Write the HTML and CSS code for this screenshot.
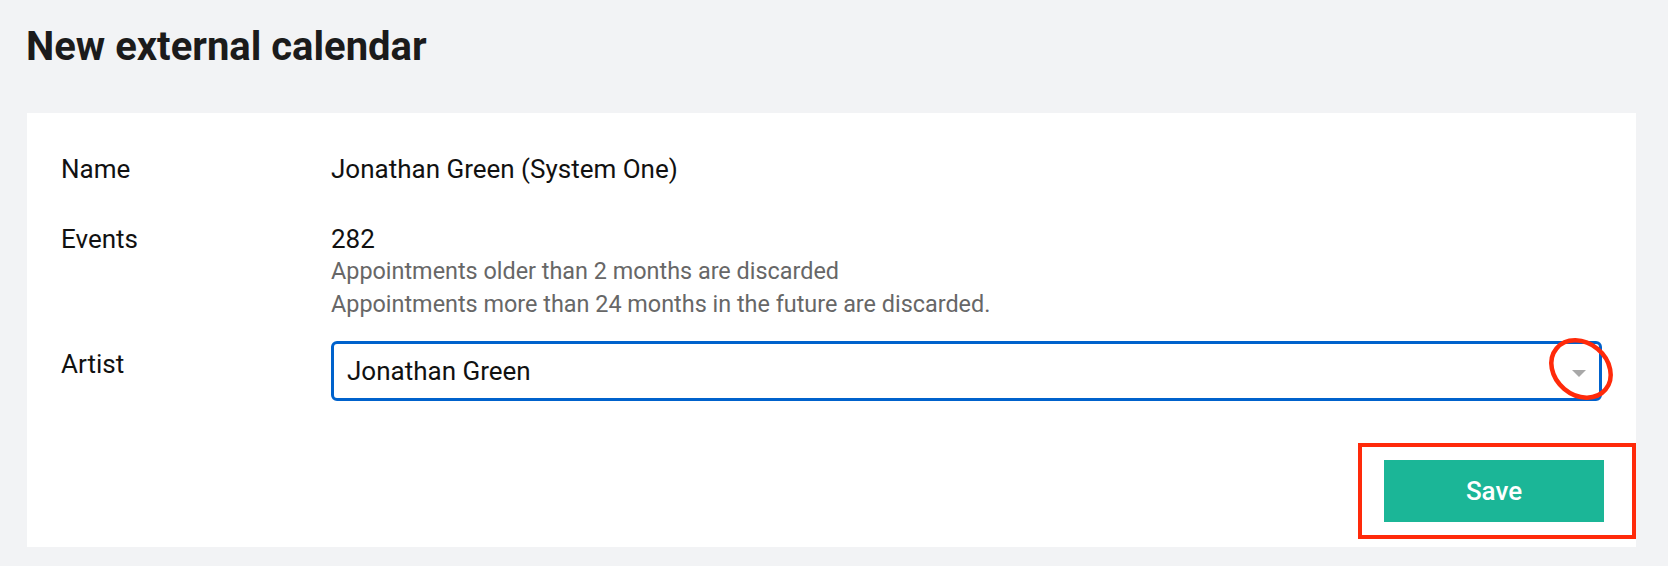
FILE: index.html
```html
<!DOCTYPE html>
<html>
<head>
<meta charset="utf-8">
<link rel="stylesheet" href="styles.css">
</head>
<body>
<h1 class="title">New external calendar</h1>
<div class="card">
  <div class="rows">
    <div class="label">Name</div>
    <div class="value">Jonathan Green (System One)</div>
    <div class="label">Events</div>
    <div class="value events">
      <div class="count">282</div>
      <div class="help">Appointments older than 2 months are discarded</div>
      <div class="help">Appointments more than 24 months in the future are discarded.</div>
    </div>
    <div class="label label-select">Artist</div>
    <div class="value">
      <div class="select-wrap">
        <div class="select">
          <span>Jonathan Green</span>
          <span class="caret"></span>
        </div>
        <svg class="mark-ellipse" width="72" height="72" viewBox="0 0 72 72">
          <ellipse cx="36" cy="36" rx="32" ry="26" transform="rotate(40 36 36)" fill="none" stroke="#ff2a0a" stroke-width="4.5"/>
        </svg>
      </div>
    </div>
  </div>
  <div class="footer">
    <div class="mark-rect">
      <button class="save">Save</button>
    </div>
  </div>
</div>
</body>
</html>
```
FILE: styles.css
```css
html, body {
  margin: 0;
  padding: 0;
}
body {
  background: #f2f3f5;
  font-family: Roboto, "Liberation Sans", sans-serif;
  color: #111;
  width: 1668px;
  height: 566px;
  overflow: hidden;
}
.title {
  margin: 0;
  padding: 23px 0 0 26px;
  font-size: 40px;
  line-height: 48px;
  font-weight: 700;
  color: #1b1b1b;
  height: 90px;
  box-sizing: border-box;
}
.card {
  margin: 23px 0 0 27px;
  width: 1609px;
  height: 434px;
  background: #fff;
  box-sizing: border-box;
  padding-top: 41px;
}
.rows {
  display: grid;
  grid-template-columns: 270px 1271px;
  row-gap: 40px;
  padding-left: 34px;
  font-size: 26px;
  line-height: 30px;
}
.events {
  margin-bottom: -20px;
}
.count {
  line-height: 31px;
}
.label-select {
  padding-top: 8px;
}
.help {
  font-size: 23.4px;
  line-height: 33px;
  color: #676767;
}
.select-wrap {
  position: relative;
}
.select {
  height: 60px;
  box-sizing: border-box;
  border: 3px solid #0062cc;
  border-radius: 6px;
  display: flex;
  align-items: center;
  justify-content: space-between;
  padding: 0 13px 0 13px;
  font-size: 26px;
}
.caret {
  width: 0;
  height: 0;
  border-left: 7px solid transparent;
  border-right: 7px solid transparent;
  border-top: 7px solid #a8a8a8;
  margin-top: 4px;
}
.mark-ellipse {
  position: absolute;
  right: -15px;
  top: -8px;
}
.footer {
  display: flex;
  justify-content: flex-end;
  margin-top: 42px;
}
.mark-rect {
  border: 4px solid #ff2a0a;
  padding: 13px 28px 13px 22px;
}
.save {
  display: block;
  width: 220px;
  height: 62px;
  border: 0;
  background: #1bb697;
  color: #fff;
  font-family: Roboto, "Liberation Sans", sans-serif;
  font-size: 26px;
  font-weight: 500;
}
```
